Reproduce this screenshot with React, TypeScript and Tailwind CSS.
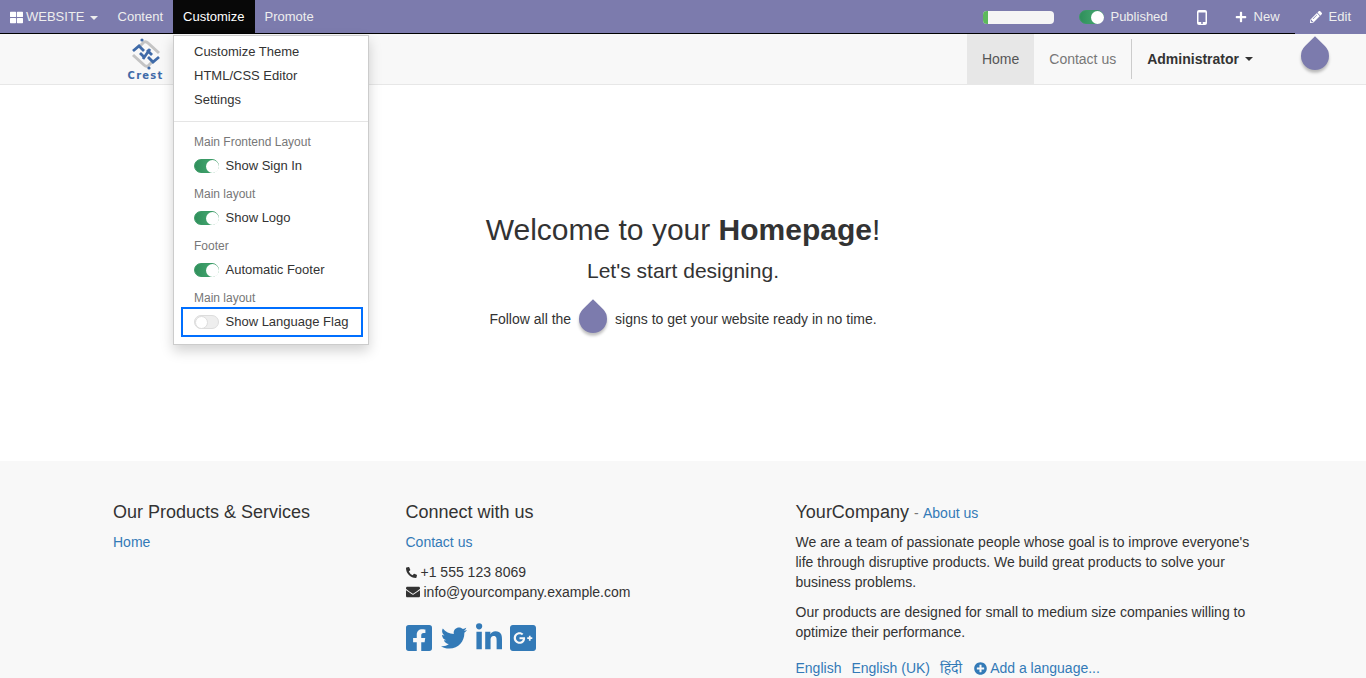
import { FaThLarge, FaPlus, FaPencilAlt, FaPhoneAlt, FaEnvelope, FaFacebookSquare, FaTwitter, FaLinkedinIn, FaGooglePlusSquare, FaPlusCircle } from "react-icons/fa";

function Caret() {
  return <span className="inline-block ml-[5px] align-middle w-0 h-0 border-x-[4px] border-x-transparent border-t-[4px] border-t-current" />;
}

function Toggle({ on }: { on: boolean }) {
  return (
    <span className={`relative inline-block w-[25px] h-[14px] rounded-full shrink-0 border ${on ? "bg-gradient-to-r from-[#2f8f5b] to-[#4caf78] border-[#3b9a66]" : "bg-[#eeeeee] border-[#dddddd]"}`}>
      <span className={`absolute top-[-0.5px] w-[13px] h-[13px] rounded-full bg-white ${on ? "right-[-0.5px]" : "left-[-0.5px] border border-[#dddddd]"}`} />
    </span>
  );
}

function Drop() {
  return (
    <span className="block w-[28px] h-[28px] rotate-45 rounded-[0_50%_50%_50%] bg-[#7c7bad] shadow-[2px_2px_3px_rgba(0,0,0,0.25)]" />
  );
}

function MenuToggle({ label, text, focus }: { label: string; text: string; focus?: boolean }) {
  return (
    <div>
      <div className="h-[24px] pl-[21px] pt-[1px] text-[12px] leading-[24px] text-[#777777]">{label}</div>
      <div className="relative h-[28px] pb-[2px] pl-[21px] flex items-center gap-[6.5px] text-[13px] text-[#333333]">
        <Toggle on={!focus} />
        <span>{text}</span>
        {focus && <span className="absolute left-[8px] top-[-2px] w-[182px] h-[30px] border-2 border-[#006fff]" />}
      </div>
    </div>
  );
}

function CrestLogo() {
  return (
    <div className="flex flex-col items-center w-[36px]">
      <svg width="32" height="32" viewBox="0 0 32 32" fill="none">
        <path d="M9 9 L14 4 Q16 3 18 5 L29 15 M23 23 L18 28 Q16 29 14 27 L3 17" stroke="#c4c4c4" strokeWidth="3" />
        <path d="M3 13 L9 8 L14 13 M18 19 L23 24 L29 19 M10 15 L15 20 M17 12 L22 17 M13 21 L20 11" stroke="#3f6aa8" strokeWidth="2.8" />
        <circle cx="12" cy="2" r="1.6" fill="#3f6aa8" />
        <circle cx="19" cy="30" r="1.6" fill="#3f6aa8" />
      </svg>
      <span className="text-[10px] leading-[11px] tracking-[1.2px] font-bold text-[#3f6aa8] font-['DejaVu_Sans',sans-serif]">Crest</span>
    </div>
  );
}

export default function App() {
  return (
    <div className="relative h-[678px] overflow-hidden bg-white text-[14px] leading-[20px] text-[#333333] font-['Liberation_Sans',sans-serif]">
      {/* Editor bar */}
      <div className="flex h-[34px] items-stretch bg-[#7c7bad] text-[13px] text-[#eeeeee]">
        <a className="flex items-center gap-[3px] pl-[10px] pr-[10px]">
          <FaThLarge className="w-[13px] h-[13px] text-white" />
          <span>WEBSITE<Caret /></span>
        </a>
        <a className="flex items-center px-[10px]">Content</a>
        <a className="flex items-center pl-[10px] pr-[11px] bg-[#080808] text-white">Customize</a>
        <a className="flex items-center pl-[9px] pr-[10px]">Promote</a>
        <div className="ml-auto flex items-center">
          <div className="w-[71px] h-[13px] rounded-[4px] bg-[#f5f5f5] overflow-hidden mr-[25px]">
            <div className="w-[5px] h-full bg-[#5cb85c]" />
          </div>
          <Toggle on />
          <span className="ml-[6px] mr-[29px]">Published</span>
          <svg width="10" height="15" viewBox="0 0 10 15" className="mr-[28px]">
            <path fillRule="evenodd" fill="#ffffff" d="M2 0h6a2 2 0 0 1 2 2v11a2 2 0 0 1-2 2H2a2 2 0 0 1-2-2V2a2 2 0 0 1 2-2zM1.5 2.5v9.5h7V2.5zM4 13a1 1 0 1 0 2 0a1 1 0 1 0-2 0z" />
          </svg>
          <FaPlus className="w-[12px] h-[12px] text-white mr-[7px]" />
          <span className="mr-[30px]">New</span>
          <FaPencilAlt className="w-[12px] h-[12px] text-white mr-[7px]" />
          <span className="mr-[15px]">Edit</span>
        </div>
      </div>
      <div className="h-px -mt-px relative bg-black mr-[71px]" />

      {/* Navbar */}
      <div className="h-[51px] bg-[#f8f8f8] border-b border-[#e7e7e7]">
        <div className="mx-auto w-[1170px] h-full flex items-start">
          <div className="ml-[29.5px] pt-[4px]"><CrestLogo /></div>
          <div className="ml-auto flex h-[50px] items-stretch">
            <a className="flex items-center px-[15px] bg-[#e7e7e7] text-[#555555]">Home</a>
            <a className="flex items-center px-[15px] text-[#777777]">Contact us</a>
            <div className="my-[5px] w-px bg-[#cccccc]" />
            <a className="flex items-center px-[15px] font-bold text-[#333333]">Administrator<span className="ml-px flex"><Caret /></span></a>
          </div>
        </div>
      </div>
      <div className="absolute left-[1301px] top-[42px]"><Drop /></div>

      {/* Hero */}
      <main className="h-[376px] flex flex-col items-center pt-[125px]">
        <h1 className="text-[30px] leading-[40px] text-[#333333]">Welcome to your <b>Homepage</b>!</h1>
        <h2 className="mt-[6px] text-[21px] leading-[30px] text-[#333333]">Let's start designing.</h2>
        <p className="mt-[13px] flex items-center h-[40px] text-[14px]">
          Follow all the
          <span className="mx-[8px]"><Drop /></span>
          signs to get your website ready in no time.
        </p>
      </main>

      {/* Footer */}
      <footer className="h-[217px] bg-[#f8f8f8]">
        <div className="mx-auto w-[1170px] grid grid-cols-[292.5px_390px_487.5px] pt-[41px]">
          <div className="px-[15px]">
            <h4 className="text-[18px] leading-[20px] mb-[10px]">Our Products &amp; Services</h4>
            <a className="text-[#337ab7]">Home</a>
          </div>
          <div className="px-[15px]">
            <h4 className="text-[18px] leading-[20px] mb-[10px]">Connect with us</h4>
            <a className="block text-[#337ab7] mb-[10px]">Contact us</a>
            <div className="flex items-center gap-[4px]"><FaPhoneAlt className="w-[11px] h-[11px]" />+1 555 123 8069</div>
            <div className="flex items-center gap-[4px]"><FaEnvelope className="w-[14px] h-[14px]" />info@yourcompany.example.com</div>
            <div className="mt-[21px] flex items-center text-[#337ab7]">
              <FaFacebookSquare className="w-[26px] h-[30px]" />
              <FaTwitter className="w-[26px] h-[26px] ml-[9px]" />
              <FaLinkedinIn className="w-[26px] h-[30px] ml-[9px]" />
              <FaGooglePlusSquare className="w-[26px] h-[30px] ml-[8px]" />
            </div>
          </div>
          <div className="px-[15px]">
            <h4 className="text-[18px] leading-[20px] mb-[9px]">YourCompany <small className="text-[14px] text-[#337ab7]"><span className="text-[#777777]">-</span> <span className="ml-[0.5px]">About us</span></small></h4>
            <p className="mb-[10px] w-[460px]">We are a team of passionate people whose goal is to improve everyone's life through disruptive products. We build great products to solve your business problems.</p>
            <p className="mb-[16px] w-[460px]">Our products are designed for small to medium size companies willing to optimize their performance.</p>
            <div className="flex items-start h-[20px] gap-[10px] text-[#337ab7]">
              <a>English</a>
              <a>English (UK)</a>
              <a className="h-[20px] leading-[24px] font-['Noto_Sans_Devanagari','Lohit_Devanagari','FreeSans',sans-serif]">हिंदी</a>
              <a className="ml-[2px] flex items-center gap-[3px]"><FaPlusCircle className="w-[13px] h-[13px]" />Add a language...</a>
            </div>
          </div>
        </div>
      </footer>

      {/* Customize menu */}
      <div className="absolute left-[173px] top-[35px] w-[196px] h-[310px] bg-white border border-[#cccccc] shadow-[0_6px_12px_rgba(0,0,0,0.175)]">
        <div className="pt-[4px] text-[13px] text-[#333333]">
          <div className="h-[24px] leading-[24px] pl-[20px]">Customize Theme</div>
          <div className="h-[24px] leading-[24px] pl-[20px]">HTML/CSS Editor</div>
          <div className="h-[24px] leading-[24px] pl-[20px]">Settings</div>
        </div>
        <div className="mt-[9px] mb-[7px] h-px bg-[#e5e5e5]" />
        <div className="-ml-px">
          <MenuToggle label="Main Frontend Layout" text="Show Sign In" />
          <MenuToggle label="Main layout" text="Show Logo" />
          <MenuToggle label="Footer" text="Automatic Footer" />
          <MenuToggle label="Main layout" text="Show Language Flag" focus />
        </div>
      </div>
    </div>
  );
}
